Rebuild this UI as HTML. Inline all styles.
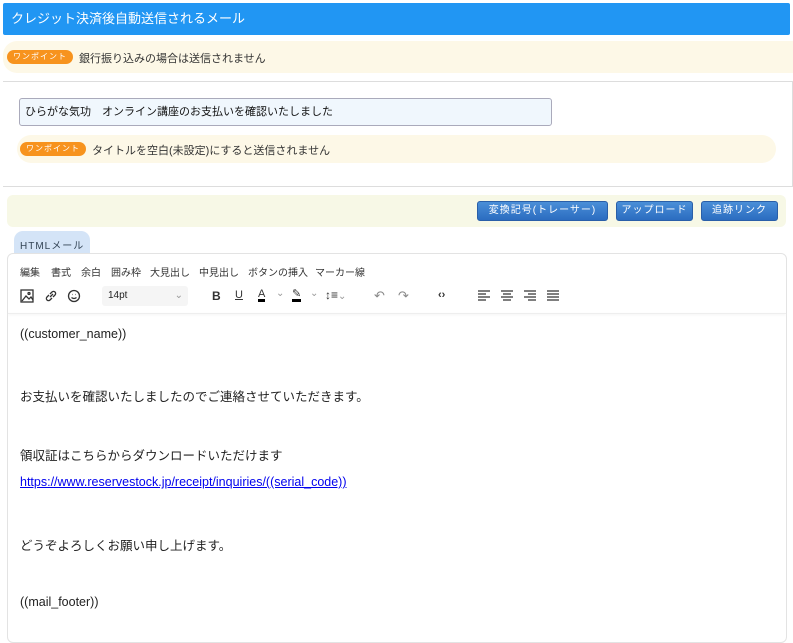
<!DOCTYPE html><html><head><meta charset="utf-8"><style>
body{margin:0;width:793px;height:630px;overflow:hidden;background:#fff;font-family:"Liberation Sans","Noto Sans CJK JP",sans-serif;position:relative;color:#333}
.a{position:absolute}
.badge{position:absolute;display:block;background:#f7931e;color:#fff;font-size:8px;border-radius:8px;height:14px;line-height:14px;padding:0 6px;letter-spacing:1px}
.btn{position:absolute;top:201px;height:20px;background:linear-gradient(#4a8fd8,#2b6cc0);border:1px solid #2a5fa8;border-radius:3px;color:#fff;font-size:10px;text-align:center;line-height:18px;box-sizing:border-box;letter-spacing:1px}
.m{font-size:10px;color:#333;top:264px}
.c{position:absolute;left:20px;font-size:12.5px;color:#222}
.ic{position:absolute;top:289px}
.al{position:absolute;top:290px}
</style></head><body>
<div class="a" style="left:3px;top:3px;width:787px;height:32px;background:#2196f3;border-radius:2px;color:#fff;font-size:13px;line-height:32px;padding-left:8px;box-sizing:border-box">クレジット決済後自動送信されるメール</div>
<div class="a" style="left:3px;top:41px;width:790px;height:32px;background:#fdf8e7;border-radius:14px 0 0 14px"></div>
<span class="badge" style="left:7px;top:50px">ワンポイント</span>
<div class="a" style="left:79px;top:50px;font-size:11px">銀行振り込みの場合は送信されません</div>
<div class="a" style="left:3px;top:81px;width:790px;height:106px;border-top:1px solid #ddd;border-bottom:1px solid #ddd;border-right:1px solid #ddd;box-sizing:border-box"></div>
<div class="a" style="left:19px;top:98px;width:533px;height:28px;border:1px solid #aab;border-radius:3px;background:#f0f7fd;box-sizing:border-box;font-size:11px;line-height:26px;padding-left:5px;color:#111">ひらがな気功　オンライン講座のお支払いを確認いたしました</div>
<div class="a" style="left:17px;top:135px;width:759px;height:28px;background:#fdf8e7;border-radius:14px"></div>
<span class="badge" style="left:20px;top:142px">ワンポイント</span>
<div class="a" style="left:92px;top:142px;font-size:11px">タイトルを空白(未設定)にすると送信されません</div>
<div class="a" style="left:7px;top:195px;width:779px;height:32px;background:#f7f8e6;border-radius:6px"></div>
<div class="btn" style="left:477px;width:131px">変換記号(トレーサー)</div>
<div class="btn" style="left:616px;width:77px">アップロード</div>
<div class="btn" style="left:701px;width:77px">追跡リンク</div>
<div class="a" style="left:14px;top:231px;width:76px;height:26px;background:#d4e4f7;border-radius:9px 9px 0 0;font-size:10px;color:#345;padding:6px 0 0 6px;box-sizing:border-box;letter-spacing:1px">HTMLメール</div>
<div class="a" style="left:7px;top:253px;width:780px;height:390px;border:1px solid #e3e3e3;border-radius:6px;background:#fff;box-sizing:border-box"></div>
<div class="a m" style="left:20px">編集</div><div class="a m" style="left:51px">書式</div><div class="a m" style="left:81px">余白</div><div class="a m" style="left:111px">囲み枠</div><div class="a m" style="left:150px">大見出し</div><div class="a m" style="left:199px">中見出し</div><div class="a m" style="left:248px">ボタンの挿入</div><div class="a m" style="left:315px">マーカー線</div>
<svg class="ic" style="left:20px" width="14" height="14" viewBox="0 0 14 14" fill="none" stroke="#333" stroke-width="1.3"><rect x="1" y="1" width="12" height="12"/><path d="M2 12l4-5 3 3 2-2 2 3"/><circle cx="9" cy="4.5" r="1"/></svg>
<svg class="ic" style="left:44px" width="14" height="14" viewBox="0 0 14 14" fill="none" stroke="#333" stroke-width="1.3"><path d="M6 8l3-3M5 6l-2 2a2 2 0 003 3l2-2M9 8l2-2a2 2 0 00-3-3L6 5"/></svg>
<svg class="ic" style="left:67px" width="14" height="14" viewBox="0 0 14 14" fill="none" stroke="#333" stroke-width="1.3"><circle cx="7" cy="7" r="5.5"/><path d="M4.5 8.5q2.5 2 5 0M5 5.5h.5M8.5 5.5h.5"/></svg>
<div class="a" style="left:102px;top:286px;width:86px;height:20px;background:#f5f5f5;border-radius:3px;font-size:10px;line-height:20px;padding-left:6px;box-sizing:border-box;color:#222">14pt<span style="position:absolute;right:5px;color:#999">⌄</span></div>
<div class="a" style="left:212px;top:289px;font-size:12px;font-weight:bold;color:#333">B</div>
<div class="a" style="left:235px;top:289px;font-size:11px;text-decoration:underline;color:#333">U</div>
<div class="a" style="left:258px;top:289px;font-size:11px;color:#333;border-bottom:3px solid #000;line-height:10px">A</div><div class="a" style="left:276px;top:288px;font-size:10px;color:#999">⌄</div>
<div class="a" style="left:292px;top:289px;font-size:11px;color:#333;border-bottom:3px solid #000;line-height:10px">✎</div><div class="a" style="left:310px;top:288px;font-size:10px;color:#999">⌄</div>
<div class="a" style="left:325px;top:288px;font-size:12px;color:#333">↕≡<span style="font-size:10px;color:#999">⌄</span></div>
<div class="a" style="left:374px;top:288px;font-size:13px;color:#888">↶</div>
<div class="a" style="left:398px;top:288px;font-size:13px;color:#888">↷</div>
<div class="a" style="left:438px;top:289px;font-size:11px;color:#333;font-weight:bold">‹›</div>
<svg class="al" style="left:478px" width="12" height="11"><path d="M0 1h12M0 4h8M0 7h12M0 10h8" stroke="#333" stroke-width="1.3"/></svg>
<svg class="al" style="left:501px" width="12" height="11"><path d="M0 1h12M2 4h8M0 7h12M2 10h8" stroke="#333" stroke-width="1.3"/></svg>
<svg class="al" style="left:524px" width="12" height="11"><path d="M0 1h12M4 4h8M0 7h12M4 10h8" stroke="#333" stroke-width="1.3"/></svg>
<svg class="al" style="left:547px" width="12" height="11"><path d="M0 1h12M0 4h12M0 7h12M0 10h12" stroke="#333" stroke-width="1.3"/></svg>
<div class="a" style="left:8px;top:313px;width:778px;height:1px;background:#eee;box-shadow:0 1px 2px #eee"></div>
<div class="c" style="top:327px">((customer_name))</div>
<div class="c" style="top:386px">お支払いを確認いたしましたのでご連絡させていただきます。</div>
<div class="c" style="top:445px">領収証はこちらからダウンロードいただけます</div>
<div class="c" style="top:475px;color:#00e;text-decoration:underline">https://www.reservestock.jp/receipt/inquiries/((serial_code))</div>
<div class="c" style="top:535px">どうぞよろしくお願い申し上げます。</div>
<div class="c" style="top:595px">((mail_footer))</div>
</body></html>
